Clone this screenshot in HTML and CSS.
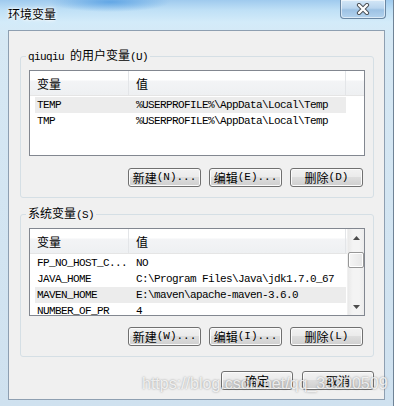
FILE: index.html
```html
<!DOCTYPE html>
<html lang="zh-CN">
<head>
  <meta charset="UTF-8">
  <title>环境变量</title>
  <link rel="stylesheet" href="styles.css">
</head>
<body>
  <div class="window">
    <div class="titlebar">
      <span class="title">环境变量</span>
      <button class="close-btn">
        <svg width="14" height="12" viewBox="0 0 14 12">
          <path d="M3 2 L11 10 M11 2 L3 10" stroke="#4a4f55" stroke-width="4.2" stroke-linecap="round"/>
          <path d="M3 2 L11 10 M11 2 L3 10" stroke="#fff" stroke-width="2.4" stroke-linecap="round"/>
        </svg>
      </button>
    </div>

    <div class="client">
      <!-- 用户变量 -->
      <fieldset class="group">
        <legend>qiuqiu <span class="zh">的用户变量</span>(U)</legend>
        <div class="listview lv-user">
          <div class="lv-main">
            <div class="lv-header">
              <div class="hcol c1">变量</div>
              <div class="hcol c2">值</div>
            </div>
            <div class="lv-body">
              <div class="row sel"><div class="cell c1">TEMP</div><div class="cell c2">%USERPROFILE%\AppData\Local\Temp</div></div>
              <div class="row"><div class="cell c1">TMP</div><div class="cell c2">%USERPROFILE%\AppData\Local\Temp</div></div>
            </div>
          </div>
        </div>
        <div class="btn-row">
          <button class="btn"><span class="zh">新建</span>(N)...</button>
          <button class="btn"><span class="zh">编辑</span>(E)...</button>
          <button class="btn"><span class="zh">删除</span>(D)</button>
        </div>
      </fieldset>

      <!-- 系统变量 -->
      <fieldset class="group group-sys">
        <legend><span class="zh">系统变量</span>(S)</legend>
        <div class="listview lv-sys">
          <div class="lv-main">
            <div class="lv-header">
              <div class="hcol c1">变量</div>
              <div class="hcol c2">值</div>
            </div>
            <div class="lv-body">
              <div class="row"><div class="cell c1">FP_NO_HOST_C...</div><div class="cell c2">NO</div></div>
              <div class="row"><div class="cell c1">JAVA_HOME</div><div class="cell c2">C:\Program Files\Java\jdk1.7.0_67</div></div>
              <div class="row sel"><div class="cell c1">MAVEN_HOME</div><div class="cell c2">E:\maven\apache-maven-3.6.0</div></div>
              <div class="row"><div class="cell c1">NUMBER_OF_PR</div><div class="cell c2">4</div></div>
            </div>
          </div>
          <div class="scrollbar">
            <div class="sb-btn">
              <svg width="7" height="4" viewBox="0 0 7 4"><polygon points="3.5,0 7,4 0,4" fill="#4d4d4d"/></svg>
            </div>
            <div class="sb-track"><div class="sb-thumb"></div></div>
            <div class="sb-btn">
              <svg width="7" height="4" viewBox="0 0 7 4"><polygon points="0,0 7,0 3.5,4" fill="#4d4d4d"/></svg>
            </div>
          </div>
        </div>
        <div class="btn-row">
          <button class="btn"><span class="zh">新建</span>(W)...</button>
          <button class="btn"><span class="zh">编辑</span>(I)...</button>
          <button class="btn"><span class="zh">删除</span>(L)</button>
        </div>
      </fieldset>

      <div class="footer">
        <button class="btn btn-wide"><span class="zh">确定</span></button>
        <button class="btn btn-wide"><span class="zh">取消</span></button>
      </div>
    </div>

    <div class="watermark">https://blog.csdn.net/qq_33200509</div>
  </div>
</body>
</html>
```

FILE: styles.css
```css
* { box-sizing: border-box; }
body { margin: 0; width: 394px; height: 406px; overflow: hidden; background: #cfe2f1; font-family: "Liberation Mono", "Noto Sans CJK SC", monospace; font-size: 11px; letter-spacing: -0.6px; color: #000; }
.zh { font-family: "Noto Sans CJK SC", sans-serif; font-size: 12px; letter-spacing: 0; }

/* 玻璃边框 */
.window {
  position: relative;
  width: 394px;
  height: 406px;
  display: flex;
  flex-direction: column;
  background:
    radial-gradient(ellipse 60px 10px at 110px 2px, rgba(70, 150, 225, 0.7), rgba(70, 150, 225, 0)),
    linear-gradient(180deg, #9fcaee 0px, #bfe0f6 10px, #d3ebf9 22px, #d6e8f4 40px, #cfe1ef 100%);
  border-right: 1px solid #6f8396;
}
.titlebar { height: 30px; display: flex; justify-content: space-between; align-items: flex-start; padding: 0 7px 0 8px; }
.title { font: 12px/16px "Noto Sans CJK SC", sans-serif; margin-top: 6px; letter-spacing: 0; text-shadow: 0 0 5px #fff, 0 0 3px #fff, 0 0 2px #fff; }
.close-btn {
  width: 46px;
  height: 19px;
  padding: 0;
  border: 1px solid #6a87a3;
  border-top: none;
  border-radius: 0 0 4px 4px;
  background: linear-gradient(#d4e7f7 0%, #b9d5ee 45%, #9dc2e4 55%, #b3d3ee 100%);
  box-shadow: inset 0 0 0 1px rgba(255, 255, 255, 0.55);
  display: flex;
  align-items: center;
  justify-content: center;
}

.client { margin: 0 8px; height: 370px; background: #f0f0f0; border: 1px solid #8e9fb1; display: flex; flex-direction: column; }

/* 分组框 */
.group { margin: 17px 10px 0 11px; padding: 6px 8px 10px; border: 1px solid #d5dfe5; border-radius: 3px; min-width: 0; }
.group-sys { margin-top: 8px; }
.group legend { padding: 0 2px; margin-left: -3px; line-height: 14px; }

.listview { border: 1px solid #828790; background: #fff; display: flex; }
.lv-user { height: 86px; }
.lv-sys { height: 88px; }
.lv-main { flex: 1; overflow: hidden; }
.lv-header {
  height: 25px;
  display: flex;
  border-bottom: 1px solid #e5e5e5;
  background: linear-gradient(#fff 0, #fff 9px, #f3f4f6 10px, #eef0f2 100%);
}
.hcol { font: 12px/24px "Noto Sans CJK SC", sans-serif; letter-spacing: 0; padding: 1px 0 0 7px; border-right: 1px solid #e3e5e8; }
.hcol.c1 { width: 99px; }
.hcol.c2 { width: 217px; }
.lv-body { padding-top: 1px; }
.row { display: flex; height: 16px; margin-left: 5px; width: 311px; line-height: 16px; white-space: nowrap; }
.row.sel { background: #ececec; }
.cell { overflow: hidden; }
.cell.c1 { width: 94px; padding-left: 2px; }
.cell.c2 { width: 217px; padding-left: 7px; }

/* 滚动条 */
.scrollbar { width: 17px; display: flex; flex-direction: column; background: linear-gradient(90deg, #e9e9e9, #f4f4f4 30%, #f4f4f4 70%, #ececec); border-left: 1px solid #f0f0f0; }
.sb-btn { height: 17px; display: flex; align-items: center; justify-content: center; }
.sb-track { flex: 1; }
.sb-thumb { height: 16px; margin: 6px 0 0 0; border: 1px solid #979797; border-radius: 2px; background: linear-gradient(90deg, #f5f5f5, #e6e6e6); box-shadow: inset 0 0 0 1px #fff; }

/* 按钮 */
.btn-row { display: flex; justify-content: flex-end; gap: 8px; margin-top: 12px; padding-right: 2px; }
.group-sys .btn-row { margin-top: 11px; }
.btn {
  width: 73px;
  height: 19px;
  padding: 0;
  border: 1px solid #707070;
  border-radius: 3px;
  background: linear-gradient(#f2f2f2 0%, #ebebeb 45%, #dddddd 50%, #cfcfcf 100%);
  box-shadow: inset 0 0 0 1px #fbfbfb;
  font: inherit;
  line-height: 17px;
  color: #000;
  display: flex;
  align-items: center;
  justify-content: center;
}
.footer { display: flex; justify-content: flex-end; gap: 9px; margin-top: 14px; padding-right: 10px; }
.btn-wide { width: 72px; }

.watermark {
  position: absolute;
  left: 142px;
  top: 374px;
  font: 16px/20px "Liberation Sans", sans-serif;
  letter-spacing: 0;
  color: rgba(255, 255, 255, 0.8);
  text-shadow: 0 0 2px rgba(60, 60, 60, 0.55);
}
```
